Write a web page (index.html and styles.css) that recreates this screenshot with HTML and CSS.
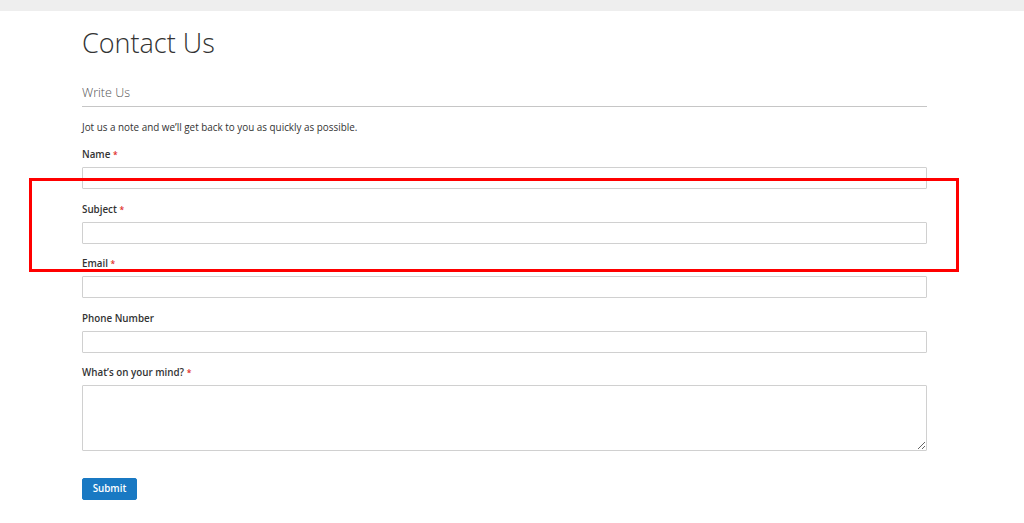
FILE: index.html
```html
<!DOCTYPE html>
<html lang="en">
<head>
<meta charset="utf-8">
<title>Contact Us</title>
<link rel="stylesheet" href="styles.css">
</head>
<body>
<div class="topbar"></div>
<main class="page">
  <h1 class="page-title">Contact Us</h1>
  <form class="contact-form">
    <div class="legend">Write Us</div>
    <p class="note">Jot us a note and we’ll get back to you as quickly as possible.</p>
    <div class="field">
      <label class="label">Name <span class="req">*</span></label>
      <input class="input" type="text">
    </div>
    <div class="field">
      <label class="label">Subject <span class="req">*</span></label>
      <input class="input" type="text">
    </div>
    <div class="field">
      <label class="label">Email <span class="req">*</span></label>
      <input class="input" type="text">
    </div>
    <div class="field">
      <label class="label">Phone Number</label>
      <input class="input" type="text">
    </div>
    <div class="field">
      <label class="label">What’s on your mind? <span class="req">*</span></label>
      <textarea class="textarea"></textarea>
    </div>
    <div class="actions">
      <button class="submit" type="button">Submit</button>
    </div>
  </form>
</main>
<div class="highlight"></div>
</body>
</html>
```
FILE: styles.css
```css
html, body {
  margin: 0;
  padding: 0;
  background: #ffffff;
}
body {
  font-family: "Open Sans", "Liberation Sans", sans-serif;
  color: #333333;
  position: relative;
  min-height: 523px;
}
.topbar {
  height: 11px;
  background: #eeeeee;
}
.page {
  margin-left: 82px;
  width: 845px;
}
.page-title {
  margin: 15px 0 0;
  font-size: 27px;
  line-height: 34px;
  font-weight: 300;
  color: #333333;
}
.contact-form {
  margin-top: 24px;
}
.legend {
  font-size: 12.5px;
  line-height: 17px;
  font-weight: 300;
  color: #555555;
  padding-bottom: 5px;
  border-bottom: 1px solid #c6c6c6;
}
.note {
  margin: 13px 0 13px;
  font-size: 9.9px;
  line-height: 14px;
}
.field {
  display: flex;
  flex-direction: column;
  margin-bottom: 12.5px;
}
.label {
  font-size: 9.8px;
  line-height: 14px;
  font-weight: 600;
  padding-top: 1px;
  margin-bottom: 5px;
}
.req {
  color: #e02b27;
  font-size: 8.5px;
}
.input {
  box-sizing: border-box;
  height: 22px;
  width: 100%;
  margin: 0;
  border: 1px solid #d0d0d0;
  border-radius: 1px;
  background: #ffffff;
  padding: 0 6px;
}
.textarea {
  box-sizing: border-box;
  height: 66px;
  width: 100%;
  margin: 0;
  border: 1px solid #d0d0d0;
  border-radius: 1px;
  background: #ffffff;
  resize: vertical;
  display: block;
}
.actions {
  display: flex;
  margin-top: 26.5px;
}
.submit {
  box-sizing: border-box;
  width: 55px;
  height: 22px;
  background: #1979c3;
  border: 1px solid #1979c3;
  border-radius: 2px;
  color: #ffffff;
  font-family: "Open Sans", "Liberation Sans", sans-serif;
  font-size: 9.8px;
  font-weight: 600;
  padding: 0;
}
.highlight {
  position: absolute;
  left: 29px;
  top: 178px;
  width: 930px;
  height: 94px;
  box-sizing: border-box;
  border: 3px solid #ff0000;
  pointer-events: none;
}
```
